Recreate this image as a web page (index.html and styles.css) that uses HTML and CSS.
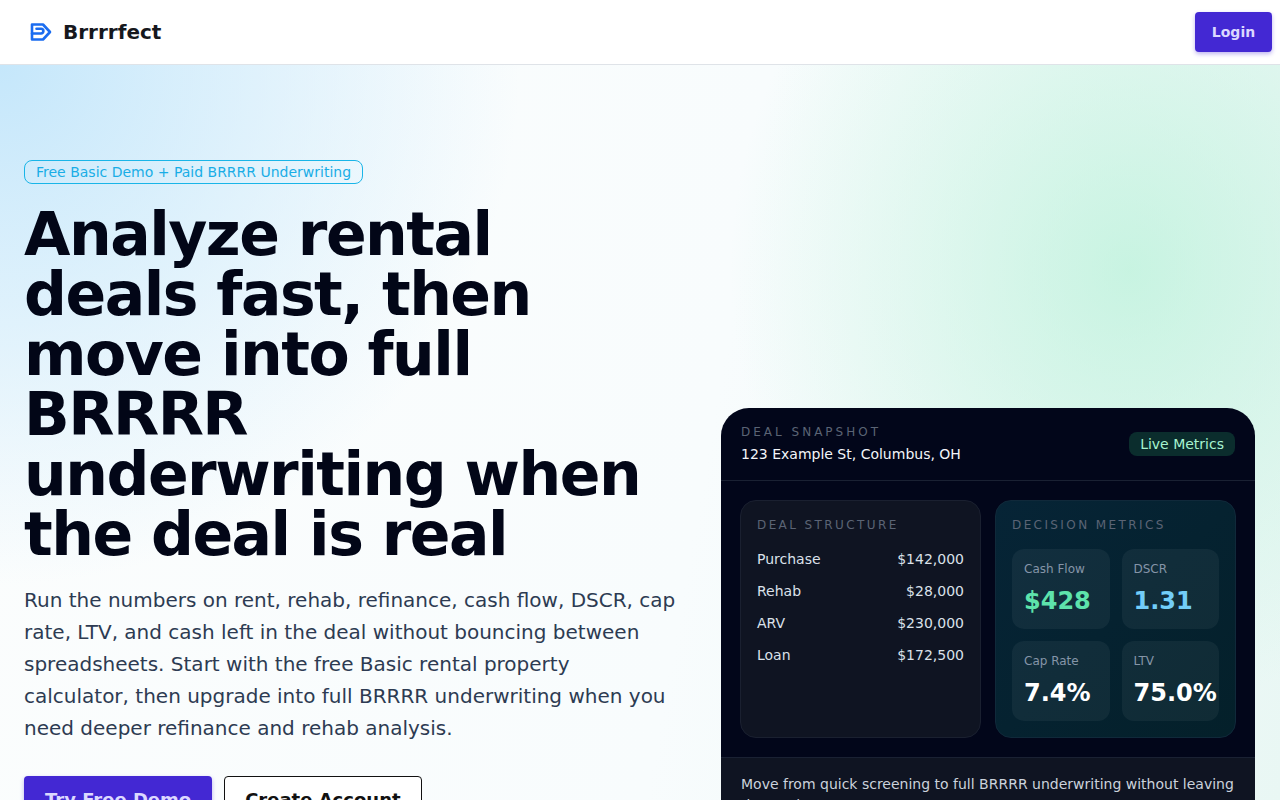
FILE: index.html
```html
<!DOCTYPE html>
<html lang="en">
<head>
    <meta charset="UTF-8">
    <meta name="viewport" content="width=device-width, initial-scale=1.0">
    <title>Brrrrfect</title>
    <link rel="stylesheet" href="styles.css">
</head>
<body>
    <header class="topbar">
        <a class="brand" href="#">
            <svg class="brand-icon" viewBox="0 0 24 24" fill="none" stroke="#1a6cf0" stroke-width="2.6" stroke-linejoin="round" stroke-linecap="round">
                <path d="M4 4.5h11L22 12l-7 7.5H4z"/>
                <path d="M4 13.5h9a2.4 2.4 0 0 0 0-4.8H8.5"/>
            </svg>
            <span>Brrrrfect</span>
        </a>
        <a class="btn btn-primary btn-login" href="#">Login</a>
    </header>

    <main class="hero">
        <section class="hero-copy">
            <span class="pill">Free Basic Demo + Paid BRRRR Underwriting</span>
            <h1>Analyze rental deals fast, then move into full BRRRR underwriting when the deal is real</h1>
            <p class="lead">Run the numbers on rent, rehab, refinance, cash flow, DSCR, cap rate, LTV, and cash left in the deal without bouncing between spreadsheets. Start with the free Basic rental property calculator, then upgrade into full BRRRR underwriting when you need deeper refinance and rehab analysis.</p>
            <div class="actions">
                <a class="btn btn-primary btn-large" href="#">Try Free Demo</a>
                <a class="btn btn-outline btn-large" href="#">Create Account</a>
            </div>
        </section>

        <aside class="snapshot">
            <div class="snapshot-head">
                <div class="snapshot-title">
                    <div class="eyebrow">DEAL SNAPSHOT</div>
                    <div class="address">123 Example St, Columbus, OH</div>
                </div>
                <span class="live">Live Metrics</span>
            </div>
            <div class="snapshot-body">
                <div class="panel">
                    <div class="eyebrow panel-title">DEAL STRUCTURE</div>
                    <div class="row"><span>Purchase</span><span>$142,000</span></div>
                    <div class="row"><span>Rehab</span><span>$28,000</span></div>
                    <div class="row"><span>ARV</span><span>$230,000</span></div>
                    <div class="row"><span>Loan</span><span>$172,500</span></div>
                </div>
                <div class="panel panel-metrics">
                    <div class="eyebrow panel-title">DECISION METRICS</div>
                    <div class="metrics">
                        <div class="metric"><div class="metric-label">Cash Flow</div><div class="metric-value green">$428</div></div>
                        <div class="metric"><div class="metric-label">DSCR</div><div class="metric-value blue">1.31</div></div>
                        <div class="metric"><div class="metric-label">Cap Rate</div><div class="metric-value">7.4%</div></div>
                        <div class="metric"><div class="metric-label">LTV</div><div class="metric-value">75.0%</div></div>
                    </div>
                </div>
            </div>
            <div class="snapshot-foot">Move from quick screening to full BRRRR underwriting without leaving the product.</div>
        </aside>
    </main>
</body>
</html>
```

FILE: styles.css
```css
* {
    box-sizing: border-box;
}
html, body {
    height: 100%;
}
body {
    margin: 0;
    font-family: "DejaVu Sans", sans-serif;
    color: #0b1020;
    background: #fff;
    overflow: hidden;
}
a {
    text-decoration: none;
}
.topbar {
    height: 65px;
    display: flex;
    align-items: center;
    justify-content: space-between;
    padding: 0 8px 0 28px;
    background: #fff;
    border-bottom: 1px solid #dfe3e8;
}
.brand {
    display: flex;
    align-items: center;
    gap: 11px;
    color: #16181d;
    font-size: 20px;
    font-weight: 700;
}
.brand-icon {
    width: 24px;
    height: 24px;
}
.btn {
    display: inline-block;
    border-radius: 4px;
    font-weight: 700;
}
.btn-primary {
    background: #4328d3;
    color: #dcd8ff;
    box-shadow: 0 2px 4px rgba(67, 40, 211, 0.35);
}
.btn-login {
    width: 77px;
    height: 40px;
    line-height: 40px;
    text-align: center;
    font-size: 14px;
}
.hero {
    height: 735px;
    display: flex;
    align-items: flex-start;
    justify-content: space-between;
    padding: 95px 25px 0 24px;
    background:
        radial-gradient(ellipse 400px 440px at 1130px 205px, rgba(176, 240, 212, 0.62) 0, rgba(190, 242, 220, 0.34) 55%, rgba(255, 255, 255, 0) 100%),
        radial-gradient(ellipse 520px 520px at 0 0, #c5e7fb 0, rgba(197, 231, 251, 0.55) 45%, rgba(255, 255, 255, 0) 100%),
        linear-gradient(100deg, #fbfdfd 0%, #f8fcfd 55%, #e9f7f4 100%);
}
.hero-copy {
    width: 654px;
}
.pill {
    display: inline-block;
    height: 24px;
    line-height: 22px;
    padding: 0 11px;
    font-size: 14px;
    color: #19ade6;
    border: 1px solid #19b5e8;
    border-radius: 8px;
}
h1 {
    margin: 20px 0 0;
    font-size: 60px;
    line-height: 60px;
    font-weight: 700;
    letter-spacing: -1.5px;
    color: #020617;
}
.lead {
    margin: 20px 0 0;
    font-size: 20px;
    line-height: 32px;
    color: #2d3b52;
}
.actions {
    display: flex;
    gap: 12px;
    margin-top: 32px;
}
.btn-large {
    height: 48px;
    line-height: 48px;
    padding: 0 21px;
    font-size: 18px;
}
.btn-outline {
    background: #fff;
    color: #111;
    border: 1px solid #111;
    padding: 0 20px;
    line-height: 46px;
}
.snapshot {
    width: 534px;
    margin-top: 248px;
    border-radius: 28px 28px 0 0;
    background: #02061a;
    flex-shrink: 0;
}
.snapshot-head {
    height: 73px;
    display: flex;
    align-items: center;
    justify-content: space-between;
    padding: 0 20px;
    border-bottom: 1px solid #1a2133;
}
.snapshot-title {
    padding-bottom: 2px;
}
.eyebrow {
    font-size: 12px;
    letter-spacing: 3px;
    color: #5b6475;
}
.address {
    margin-top: 7px;
    font-size: 14px;
    color: #f3f5f9;
}
.live {
    padding: 0 11px;
    height: 24px;
    line-height: 24px;
    border-radius: 8px;
    font-size: 14px;
    color: #a7f3d0;
    background: #0b2d2d;
}
.snapshot-body {
    display: grid;
    grid-template-columns: 241px 241px;
    gap: 14px;
    padding: 19px 19px;
    border-bottom: 1px solid #1a2133;
}
.panel {
    height: 238px;
    padding: 16px;
    border-radius: 16px;
    background: #0f1422;
    border: 1px solid #1a2030;
}
.panel-metrics {
    background: linear-gradient(135deg, #062436, #04202a);
    border-color: #10293a;
}
.panel-title {
    line-height: 16px;
    letter-spacing: 2.4px;
}
.row {
    display: flex;
    justify-content: space-between;
    margin-top: 16px;
    font-size: 14px;
    line-height: 16px;
    color: #dbe1ea;
}
.panel-title + .row {
    margin-top: 18px;
}
.metrics {
    display: grid;
    grid-template-columns: minmax(0, 1fr) minmax(0, 1fr);
    gap: 12px;
    margin-top: 16px;
}
.metric {
    height: 80px;
    padding: 12px;
    border-radius: 12px;
    background: rgba(255, 255, 255, 0.05);
}
.metric-label {
    font-size: 12px;
    line-height: 16px;
    color: #8595a8;
}
.metric-value {
    margin-top: 8px;
    font-size: 24px;
    line-height: 32px;
    font-weight: 700;
    color: #fff;
    white-space: nowrap;
}
.green {
    color: #5ee3ac;
}
.blue {
    color: #72cdf8;
}
.snapshot-foot {
    padding: 16px 20px;
    font-size: 14px;
    line-height: 21px;
    color: #cbd2dc;
    background: #0f1422;
}
```
